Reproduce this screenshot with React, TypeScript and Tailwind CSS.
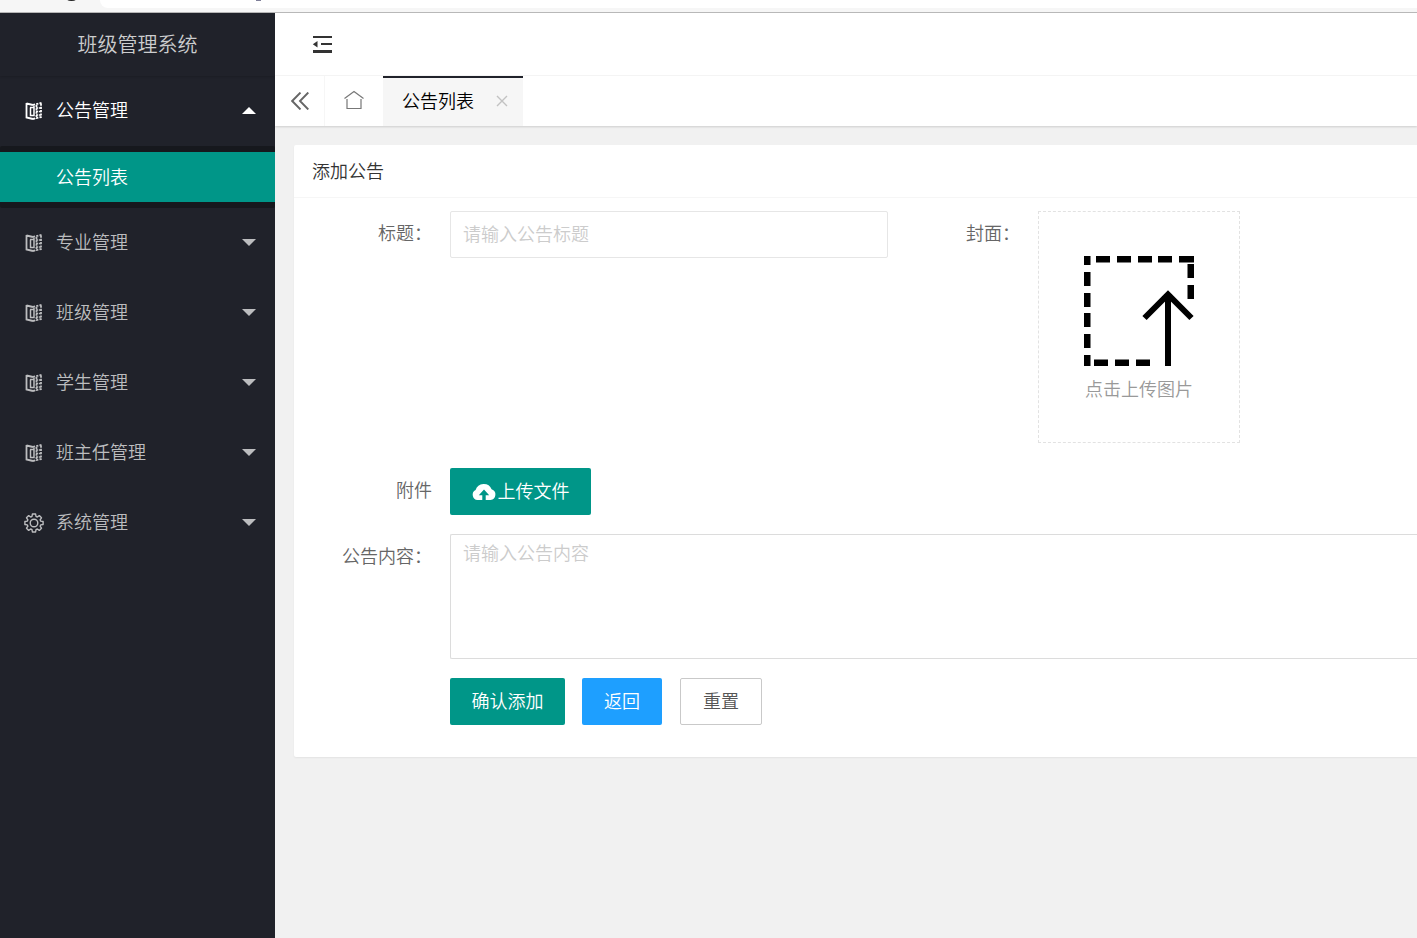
const MapIcon = () => (
  <svg className="h-[18px] w-[18px]" viewBox="0 0 18 18" fill="none" stroke="currentColor">
    <path d="M1.500 1v14.500l6.500 1.500M1.500 1.500l6.500 1.500" strokeWidth="1.8" />
    <path d="M5.500 5.500v8h3.500V4" strokeWidth="1.5" />
    <path d="M5 5.500h4" strokeWidth="1.500" />
    <path d="M8 3l8.500-2M8 17l8.500-2M11.500 3v14M16 1.500v14" strokeWidth="1.8" strokeDasharray="2.200 1.100" />
    <path d="M11 6h5M11 9.500h5M11 13h5" strokeWidth="1.3" strokeDasharray="2 .8" />
  </svg>
);

const GearIcon = () => (
  <svg className="h-5 w-5" viewBox="0 0 20 20" fill="none" stroke="currentColor" strokeWidth="1.4" strokeLinejoin="round">
    <path d="M8.400 1h3.200l.4 2.400 1.300.6 2-1.400 2.200 2.200-1.400 2 .6 1.300 2.400.4v3l-2.400.4-.6 1.300 1.400 2-2.200 2.200-2-1.400-1.300.6-.4 2.400H8.400L8 16.600l-1.300-.6-2 1.400-2.200-2.200 1.400-2-.6-1.300L.9 11.500v-3l2.400-.4.6-1.300-1.400-2 2.200-2.200 2 1.400L8 3.400z" />
    <circle cx="10" cy="10" r="3.8" />
  </svg>
);

const ShrinkIcon = () => (
  <svg className="h-[18px] w-5" viewBox="0 0 20 18" fill="#333">
    <path d="M1 0h19v2H1zM9 7h11v2H9zM1 14h19v3H1zM5.500 5v6.500L.8 8.200z" />
  </svg>
);

const DoubleLeftIcon = () => (
  <svg className="h-[18px] w-[18px]" viewBox="0 0 18 18" fill="none" stroke="#666" strokeWidth="1.9">
    <path d="M9.500.5L1.200 9l8.300 8.500M17.300.5L9 9l8.300 8.500" />
  </svg>
);

const HomeIcon = () => (
  <svg className="h-5 w-5" viewBox="0 0 20 20" fill="none" stroke="#777" strokeWidth="1.2">
    <path d="M.5 8.500L10 1.500l9.500 7M3 9v9.500h14V9" />
  </svg>
);

const CloseIcon = () => (
  <svg className="h-3 w-3" viewBox="0 0 12 12" fill="none" stroke="#c2c2c2" strokeWidth="1.4">
    <path d="M1 1l10 10M11 1L1 11" />
  </svg>
);

const UploadAreaIcon = () => (
  <svg className="h-[110px] w-[110px]" viewBox="0 0 110 110" fill="#000">
    <path d="M0 0h6.500v9H0zM0 16h6.500v14H0zM0 37h6.500v14H0zM0 57h6.500v14H0zM0 78h6.500v14H0zM0 99h6.500v11H0z" />
    <path d="M12 0h14v6.500H12zM33 0h14v6.500H33zM54 0h14v6.500H54zM74 0h14v6.500H74zM95 0h15v6.500H95zM103.500 8h6.500v14h-6.500zM103.500 29h6.500v14h-6.500z" />
    <path d="M10 103.500h14v6.500H10zM31 103.500h14v6.500H31zM52 103.500h14v6.500H52z" />
    <path d="M84 38v72M60.500 62L84 38.500 107.500 62" fill="none" stroke="#000" strokeWidth="6" />
  </svg>
);

const CloudUploadIcon = () => (
  <svg className="h-[18px] w-6" viewBox="0 0 24 18">
    <path d="M5.500 17A5.300 5.300 0 0 1 3.600 7 8.500 8.500 0 0 1 19.600 6.300 5.500 5.500 0 0 1 18.500 17z" fill="#fff" />
    <path d="M12 6.500l5.200 5.700h-3.500V17h-3.400v-4.800H6.800z" fill="#009688" />
  </svg>
);

const Arrow = ({ up }: { up?: boolean }) => (
  <svg className="h-[7px] w-3.5" viewBox="0 0 14 7" fill="currentColor">
    <path d={up ? 'M0 7L7 0l7 7z' : 'M0 0h14L7 7z'} />
  </svg>
);

const menus = [
  { title: '公告管理', icon: <MapIcon />, children: ['公告列表'] },
  { title: '专业管理', icon: <MapIcon /> },
  { title: '班级管理', icon: <MapIcon /> },
  { title: '学生管理', icon: <MapIcon /> },
  { title: '班主任管理', icon: <MapIcon /> },
  { title: '系统管理', icon: <GearIcon /> },
];

const AddressBar = () => (
  <div className="flex h-[13px] items-start border-b border-[#b8b8b8] bg-[#f6f6f6]">
    <svg className="h-2 w-[100px] shrink-0" viewBox="0 0 100 8">
      <ellipse cx="71.500" cy="-1" rx="4.500" ry="2" fill="#222" />
    </svg>
    <div className="h-2 flex-1 rounded-bl-xl bg-white">
      <svg className="h-2 w-[200px]" viewBox="0 0 200 8">
        <path d="M19 -1.500a8 3 0 0 0 13 0" fill="#777" />
        <path d="M156 0h5" stroke="#557" strokeWidth="1.500" />
      </svg>
    </div>
  </div>
);

const Sidebar = () => (
  <aside className="w-[275px] shrink-0 bg-[#20222a] text-[#bcbdbf]">
    <div className="flex h-[63px] items-center justify-center pb-0.5 text-xl text-[#cccdce] shadow-[0_1px_2px_rgba(0,0,0,0.15)]">
      班级管理系统
    </div>
    <nav>
      {menus.map((menu) => (
        <div key={menu.title} className={menu.children ? 'text-white' : ''}>
          <button type="button" className="flex h-[70px] w-full items-center pr-[19px] pb-0.5 pl-6">
            <span className="flex w-5 justify-center pt-0.5">{menu.icon}</span>
            <span className="ml-3 flex-1 pb-0.5 text-left">{menu.title}</span>
            <Arrow up={!!menu.children} />
          </button>
          {menu.children && (
            <div className="rounded-xs bg-[#16181d] py-1.5">
              {menu.children.map((child) => (
                <a key={child} href="#" className="flex h-[50px] items-center bg-[#009688] pb-0.5 pl-14">
                  {child}
                </a>
              ))}
            </div>
          )}
        </div>
      ))}
    </nav>
  </aside>
);

const TabBar = () => (
  <div className="flex h-[50px] bg-white shadow-[0_1px_2px_rgba(0,0,0,0.15)]">
    <button type="button" aria-label="向左" className="flex w-[50px] items-center justify-center border-r border-[#f6f6f6]">
      <DoubleLeftIcon />
    </button>
    <button type="button" aria-label="主页" className="flex w-[58px] items-center justify-center pb-0.5">
      <HomeIcon />
    </button>
    <div className="flex items-center border-t-2 border-[#20222a] bg-[#f6f6f6] pr-[15px] pb-1 pl-[19px] text-black">
      <a href="#">公告列表</a>
      <button type="button" aria-label="关闭" className="ml-[22px] pt-0.5">
        <CloseIcon />
      </button>
    </div>
  </div>
);

const labelClass = 'w-[138px] shrink-0 pt-[9px] pr-[18px] text-right leading-6';
const buttonClass = 'flex h-[47px] items-center justify-center rounded-xs pb-0.5';

const NoticeForm = () => (
  <form className="pt-[13px] pb-8 pl-[18px] text-[#666]">
    <div className="grid grid-cols-[minmax(0,1fr)_517px]">
      <div className="flex items-start">
        <label htmlFor="title" className={labelClass}>标题：</label>
        <input
          id="title"
          type="text"
          placeholder="请输入公告标题"
          className="mr-3 h-[47px] min-w-0 flex-1 rounded-xs border border-[#e6e6e6] px-3 pb-1 placeholder:text-[#ccc]"
        />
      </div>
      <div className="flex items-start">
        <span className={labelClass}>封面：</span>
        <button
          type="button"
          className="flex h-[232px] w-[202px] flex-col items-center border border-dashed border-[#e2e2e2] pt-11 text-[#999]"
        >
          <UploadAreaIcon />
          <span className="mt-2.5 leading-6">点击上传图片</span>
        </button>
      </div>
    </div>

    <div className="mt-[25px] flex items-start">
      <span className={labelClass}>附件</span>
      <button type="button" className={`${buttonClass} w-[141px] gap-0.5 bg-[#009688] text-white`}>
        <span className="pt-0.5">
          <CloudUploadIcon />
        </span>
        上传文件
      </button>
    </div>

    <div className="mt-[19px] flex items-start">
      <label htmlFor="content" className={labelClass}>公告内容：</label>
      <textarea
        id="content"
        placeholder="请输入公告内容"
        className="h-[125px] min-w-0 flex-1 resize-none rounded-l-xs border border-r-0 border-[#dcdcdc] px-3 py-[5px] leading-6 placeholder:text-[#ccc]"
      />
    </div>

    <div className="mt-[19px] ml-[138px] flex">
      <button type="submit" className={`${buttonClass} w-[115px] bg-[#009688] text-white`}>确认添加</button>
      <button type="button" className={`${buttonClass} ml-[17px] w-20 bg-[#1e9fff] text-white`}>返回</button>
      <button type="reset" className={`${buttonClass} ml-[18px] w-[82px] border border-[#c9c9c9] text-[#555]`}>重置</button>
    </div>
  </form>
);

const App = () => {
  return (
    <div className="flex min-h-screen flex-col bg-[#f1f1f1] font-['Noto_Sans_CJK_SC',sans-serif] text-[18px] font-[350]">
      <AddressBar />
      <div className="flex flex-1">
        <Sidebar />
        <main className="min-w-0 flex-1">
          <header className="flex h-[63px] items-center border-b border-[#f6f6f6] bg-white pt-0.5 pl-[37px]">
            <button type="button" aria-label="侧边伸缩">
              <ShrinkIcon />
            </button>
          </header>
          <TabBar />
          <section className="mt-[19px] ml-[19px] rounded-l-xs bg-white shadow-[0_1px_2px_rgba(0,0,0,0.06)]">
            <h1 className="flex h-[53px] items-center border-b border-[#f6f6f6] pb-0.5 pl-[18px] text-[#333]">添加公告</h1>
            <NoticeForm />
          </section>
        </main>
      </div>
    </div>
  );
};

export default App;
